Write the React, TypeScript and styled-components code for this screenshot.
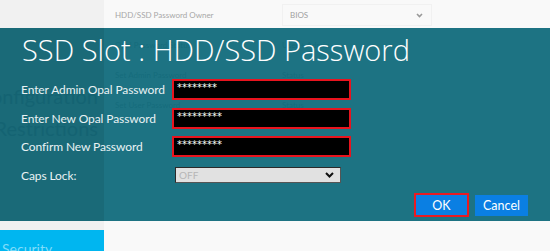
import React from "react";
import styled, { createGlobalStyle } from "styled-components";

const Global = createGlobalStyle`
  html, body { margin: 0; padding: 0; background: #f9f9f9; }
  * { box-sizing: border-box; }
`;

const Screen = styled.div`
  position: relative;
  width: 550px;
  height: 251px;
  overflow: hidden;
  font-family: Lato, "Open Sans", sans-serif;
  display: grid;
  grid-template-columns: 104px 1fr;
`;

const Sidebar = styled.nav`
  background: #f1f1f1;
  display: flex;
  flex-direction: column;
  padding-top: 84px;
  gap: 8px;
  overflow: hidden;
`;

const NavItem = styled.div`
  display: flex;
  justify-content: flex-end;
  white-space: nowrap;
  font-size: 20px;
  color: #707070;
  padding-right: 6px;
`;

const SecurityItem = styled.div`
  margin-top: auto;
  height: 21px;
  background: #00b6f0;
  color: #7fdcfa;
  font-size: 14px;
  padding: 12px 0 0 2px;
  line-height: 14px;
  overflow: hidden;
`;

const Main = styled.main`
  background: #f9f9f9;
  display: flex;
  flex-direction: column;
  padding: 3px 0 0 11px;
`;

const SettingRow = styled.div`
  display: grid;
  grid-template-columns: 167px 150px;
  align-items: center;
  height: 24px;
  margin-bottom: 6px;
  font-size: 8px;
  color: #a8a8a8;
`;

const SettingValue = styled.div`
  display: flex;
  align-items: center;
  justify-content: space-between;
  height: 22px;
  padding: 0 8px 0 7px;
  border: 1px solid #f1f1f1;
  color: #a0a0a0;
`;

const GhostRow = styled(SettingRow)`
  color: #6a6a6a;
`;

const Dialog = styled.section`
  position: absolute;
  left: 0;
  right: 0;
  top: 28px;
  height: 193px;
  background: rgba(17, 108, 124, 0.95);
  display: flex;
  flex-direction: column;
  padding: 3px 22px 0 21px;
  &::before {
    content: "";
    position: absolute;
    left: 0;
    top: 0;
    bottom: 0;
    width: 104px;
    background: rgba(0, 0, 0, 0.08);
    pointer-events: none;
  }
`;

const Title = styled.h1`
  position: relative;
  margin: 0 0 10px 1px;
  font-family: "Open Sans", sans-serif;
  font-weight: 300;
  font-size: 29px;
  line-height: 38px;
  color: #ffffff;
  white-space: nowrap;
`;

const Form = styled.div`
  position: relative;
  display: grid;
  grid-template-columns: 151px 179px;
  grid-auto-rows: 21px;
  row-gap: 7.5px;
  align-items: center;
`;

const Label = styled.label`
  font-size: 12px;
  letter-spacing: -0.1px;
  color: #e9f2f4;
  white-space: nowrap;
`;

const Field = styled.div`
  height: 21px;
  background: #000;
  border: 2px solid #e8141e;
  color: #fff;
  font-family: "DejaVu Sans", sans-serif;
  font-size: 10px;
  line-height: 14px;
  padding-left: 3px;
`;

const Select = styled.div`
  margin-left: 3px;
  width: 166px;
  height: 16px;
  background: #e1e1e1;
  border: 1px solid #2a2a2a;
  border-right-color: #555;
  border-bottom-color: #555;
  display: flex;
  align-items: center;
  justify-content: space-between;
  padding: 0 6px 0 3px;
  font-size: 10px;
  color: #b6b6b6;
`;

const Actions = styled.div`
  position: relative;
  margin-top: auto;
  margin-bottom: 4px;
  display: flex;
  justify-content: flex-end;
  align-items: center;
  gap: 6px;
`;

const Button = styled.button<{ $focused?: boolean }>`
  width: ${(p) => (p.$focused ? "55px" : "53px")};
  height: ${(p) => (p.$focused ? "24px" : "21px")};
  background: #0a7fe3;
  border: ${(p) => (p.$focused ? "2px solid #ea1a22" : "none")};
  color: #fff;
  font-family: Lato, sans-serif;
  font-size: 12.5px;
  padding: 0;
  display: flex;
  align-items: center;
  justify-content: center;
`;

const Chevron = () => (
  <svg width="9" height="6" viewBox="0 0 9 6">
    <path d="M1 1 L4.5 4.5 L8 1" stroke="#111" strokeWidth="2" fill="none" />
  </svg>
);

const SmallChevron = () => (
  <svg width="7" height="5" viewBox="0 0 7 5">
    <path d="M1 1 L3.5 3.5 L6 1" stroke="#999" strokeWidth="1.6" fill="none" />
  </svg>
);

export default function App() {
  return (
    <>
      <Global />
      <Screen>
        <Sidebar>
          <NavItem>Configuration</NavItem>
          <NavItem>Restrictions</NavItem>
          <SecurityItem>Security</SecurityItem>
        </Sidebar>
        <Main>
          <SettingRow>
            <span>HDD/SSD Password Owner</span>
            <SettingValue>
              <span>BIOS</span>
              <SmallChevron />
            </SettingValue>
          </SettingRow>
          <GhostRow>
            <span>Opal Password Status</span>
            <span>User + Admin</span>
          </GhostRow>
          <GhostRow>
            <span>Set Admin Password</span>
            <span>Status</span>
          </GhostRow>
          <GhostRow>
            <span>Set User Password</span>
            <span>Status</span>
          </GhostRow>
        </Main>
        <Dialog>
          <Title>SSD Slot : HDD/SSD Password</Title>
          <Form>
            <Label>Enter Admin Opal Password</Label>
            <Field>********</Field>
            <Label>Enter New Opal Password</Label>
            <Field>*********</Field>
            <Label>Confirm New Password</Label>
            <Field>*********</Field>
            <Label>Caps Lock:</Label>
            <Select>
              <span>OFF</span>
              <Chevron />
            </Select>
          </Form>
          <Actions>
            <Button $focused>OK</Button>
            <Button>Cancel</Button>
          </Actions>
        </Dialog>
      </Screen>
    </>
  );
}
